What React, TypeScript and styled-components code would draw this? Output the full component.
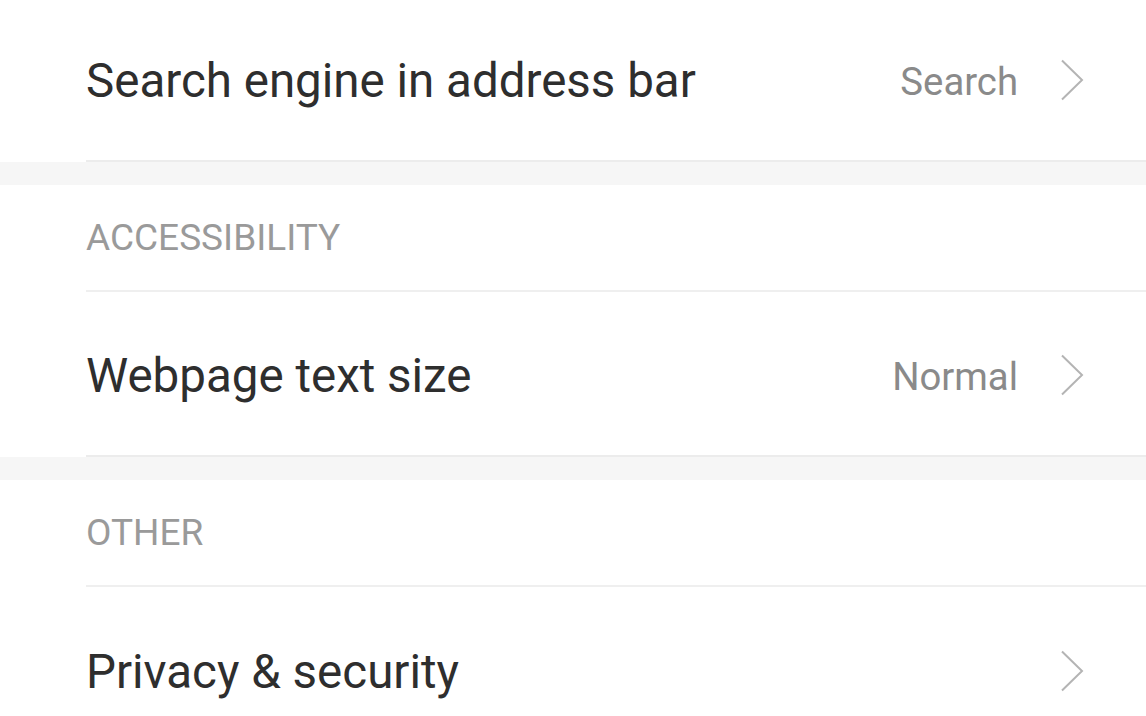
import React from "react";
import styled, { createGlobalStyle } from "styled-components";

const Global = createGlobalStyle`
  html, body { margin: 0; padding: 0; background: #ffffff; }
  body { font-family: Roboto, "Noto Sans", sans-serif; overflow: hidden; }
`;

const Page = styled.div`
  width: 1146px;
  height: 716px;
  overflow: hidden;
  background: #ffffff;
  display: flex;
  flex-direction: column;
`;

const Group = styled.section<{ $first?: boolean }>`
  display: flex;
  flex-direction: column;
  flex-shrink: 0;
  background: #ffffff;
  margin-top: ${(p) => (p.$first ? "-3px" : "0")};
  border-bottom: 23px solid #f6f6f6;
`;

const Header = styled.div`
  height: 107px;
  margin-left: 86px;
  display: flex;
  align-items: center;
  border-bottom: 2px solid #efefef;
  color: #9a9a9a;
  font-size: 37px;
  box-sizing: border-box;
`;

const Row = styled.div<{ $last?: boolean }>`
  height: 165px;
  flex-shrink: 0;
  margin-left: 86px;
  padding-right: 62px;
  padding-top: 5px;
  display: flex;
  align-items: center;
  box-sizing: border-box;
  border-bottom: ${(p) => (p.$last ? "2px solid #ececec" : "none")};
`;

const Label = styled.div`
  flex: 1;
  color: #2e2e2e;
  font-size: 47.5px;
`;

const Value = styled.div`
  color: #8a8a8a;
  font-size: 38.3px;
  margin-right: 42px;
`;

const ChevronBox = styled.svg`
  flex-shrink: 0;
  margin-top: -3px;
`;

const Chevron = () => (
  <ChevronBox width="24" height="42" viewBox="0 0 24 42" fill="none">
    <path d="M2 1.5 L22 21 L2 40.5" stroke="#b4b4b4" strokeWidth="2" />
  </ChevronBox>
);

export default function App() {
  return (
    <Page>
      <Global />
      <Group $first>
        <Row $last>
          <Label>Search engine in address bar</Label>
          <Value>Search</Value>
          <Chevron />
        </Row>
      </Group>
      <Group>
        <Header>ACCESSIBILITY</Header>
        <Row $last>
          <Label>Webpage text size</Label>
          <Value>Normal</Value>
          <Chevron />
        </Row>
      </Group>
      <Group>
        <Header>OTHER</Header>
        <Row>
          <Label>Privacy &amp; security</Label>
          <Chevron />
        </Row>
      </Group>
    </Page>
  );
}
